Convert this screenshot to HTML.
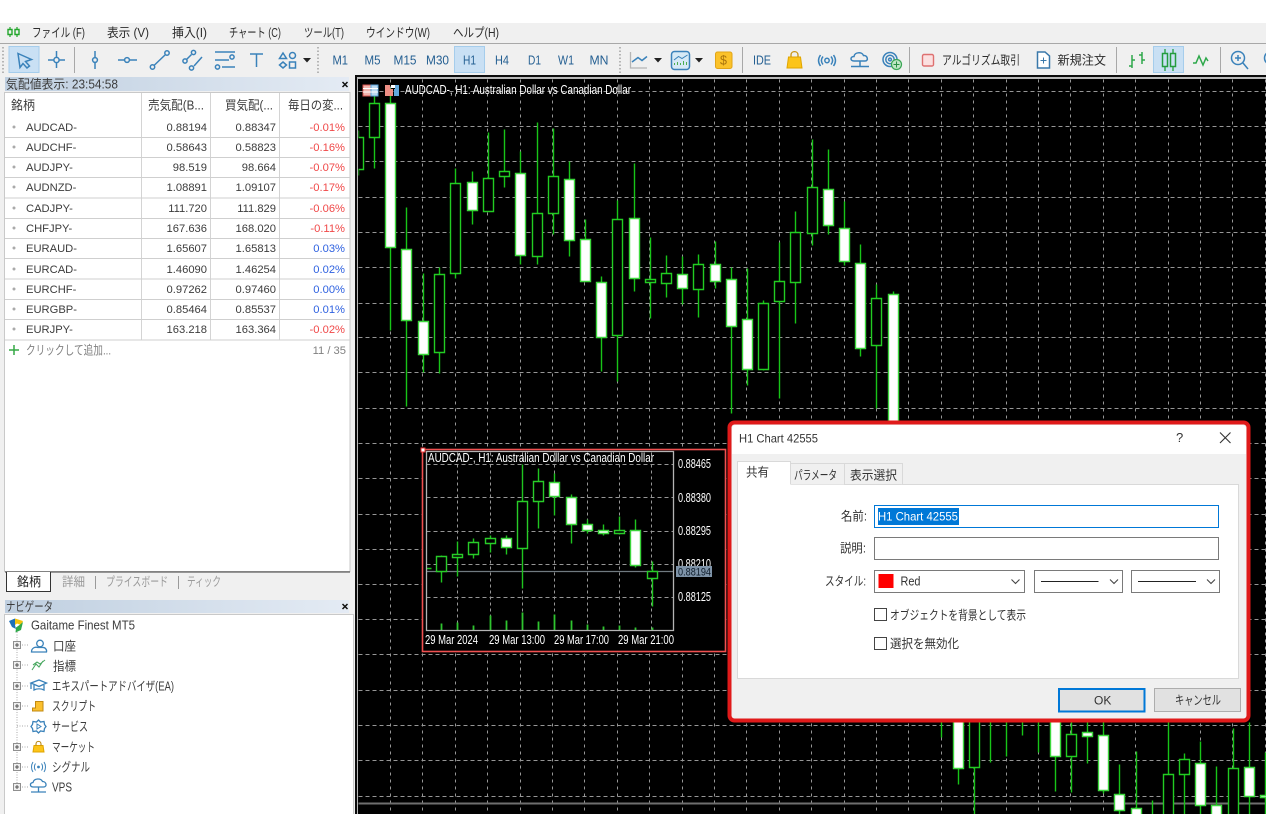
<!DOCTYPE html>
<html lang="ja"><head><meta charset="utf-8"><title>MT5</title>
<style>
html,body{margin:0;padding:0;background:#fff;width:1266px;height:836px;overflow:hidden}
svg{display:block;filter:blur(.3px)}
text{font-family:"Liberation Sans","Noto Sans CJK JP",sans-serif;font-size:11.2px;fill:#3c3c3c}
text[textLength]{font-size:12.6px}
.tb{fill:#245f92;font-size:12.5px}
.r{text-anchor:end}
.m{fill:#fff;font-size:10.8px}
.i{fill:none;stroke:#3a82ba;stroke-width:1.5}
.c{font-size:12.8px;fill:#2c2c2c}
</style></head><body>
<svg width="1266" height="836" viewBox="0 0 1266 836" xmlns="http://www.w3.org/2000/svg">
<defs>
<linearGradient id="h"><stop offset="0" stop-color="#bfcfe0"/><stop offset="1" stop-color="#e4ebf4"/></linearGradient>
<clipPath id="cc"><rect x="358" y="79" width="908" height="735"/></clipPath>
</defs>
<rect width="1266" height="836" fill="#fff"/>

<!-- main chart -->
<rect x="355" y="75" width="911" height="739" fill="#0c0c0c"/>
<rect x="357" y="77" width="909" height="737" fill="#b8b8b8"/>
<rect x="358" y="79" width="908" height="735" fill="#000"/>
<g clip-path="url(#cc)" transform="translate(.5 .5)">
<path fill="none" stroke="#969696" stroke-dasharray="4 3" d="M358 91H1266M358 126H1266M358 161H1266M358 197H1266M358 232H1266M358 267H1266M358 303H1266M358 337H1266M358 372H1266M358 408H1266M358 443H1266M358 478H1266M358 514H1266M358 549H1266M358 584H1266M358 619H1266M358 654H1266M358 690H1266M358 725H1266M358 760H1266M358 796H1266"/>
<path fill="none" stroke="#969696" stroke-dasharray="3 4" d="M390 79V814M422 79V814M455 79V814M487 79V814M520 79V814M552 79V814M584 79V814M617 79V814M649 79V814M682 79V814M714 79V814M746 79V814M779 79V814M811 79V814M844 79V814M876 79V814M908 79V814M941 79V814M973 79V814M1006 79V814M1038 79V814M1070 79V814M1103 79V814M1135 79V814M1168 79V814M1200 79V814M1232 79V814M1265 79V814"/>
<path fill="none" stroke="#6e6e6e" stroke-width="2" d="M358 803H1266"/>
<path fill="none" stroke="#18c418" stroke-width="1.400" d="M358 130V175M374 96V168M390 88V330M406 207V406M423 273V372M439 267V373M455 168V278M472 171V224M488 132V211M504 129V187M520 151V264M537 122V264M553 128V234M569 161V256M585 219V281M601 276V371M617 200V381M634 163V291M650 237V318M666 255V297M682 256V304M698 254V317M715 241V288M731 267V413M747 268V385M763 300V370M779 242V398M795 211V323M812 139V245M828 149V234M844 201V265M860 244V356M876 284V408M893 291V430M941 722V737M958 722V784M974 722V814M990 722V762M1006 722V756M1022 722V735M1038 722V752M1055 722V791M1071 722V792M1087 722V763M1103 722V793M1119 764V814M1136 751V814M1152 800V814M1168 722V814M1184 753V814M1200 741V814M1216 766V814M1233 728V814M1249 722V814M1265 752V814"/>
<path fill="#000" stroke="#22cc22" stroke-width="1.400" d="M353 137h10V169h-10zM369 103h10V137h-10zM434 274h10V352h-10zM450 183h10V273h-10zM483 178h10V211h-10zM499 171h10V176h-10zM532 213h10V256h-10zM548 176h10V213h-10zM612 219h10V335h-10zM645 279h10V282h-10zM661 273h10V283h-10zM693 264h10V289h-10zM758 303h10V369h-10zM774 281h10V301h-10zM790 232h10V282h-10zM807 187h10V233h-10zM871 298h10V345h-10zM969 700h10V767h-10zM1066 734h10V756h-10zM1163 774h10V830h-10zM1179 759h10V774h-10zM1228 768h10V830h-10z"/>
<path fill="#fff" stroke="#3cd83c" stroke-width="1.400" d="M385 103h10V247h-10zM401 249h10V320h-10zM418 321h10V354h-10zM467 182h10V210h-10zM515 173h10V255h-10zM564 179h10V240h-10zM580 239h10V281h-10zM596 282h10V337h-10zM629 218h10V278h-10zM677 274h10V288h-10zM710 264h10V281h-10zM726 279h10V326h-10zM742 319h10V369h-10zM823 189h10V225h-10zM839 228h10V261h-10zM855 263h10V348h-10zM888 294h10V440h-10zM953 700h10V768h-10zM1050 700h10V756h-10zM1082 732h10V736h-10zM1098 735h10V790h-10zM1114 794h10V810h-10zM1131 808h10V830h-10zM1195 763h10V805h-10zM1211 805h10V830h-10zM1244 767h10V796h-10zM1260 795h10V797h-10z"/>
</g>
<!-- chart title -->
<rect x="363" y="85" width="15" height="11" fill="#f3b5ae" stroke="#d9534f"/>
<rect x="371" y="85" width="7" height="11" fill="#bcd9ef" stroke="#5aa2d8"/>
<path d="M363 88.500H378M363 92H378" stroke="#fff"/>
<path d="M385 85h5v4h3v7h-8z" fill="#ee8f85"/><path d="M391 85h4v3h-4z" fill="#fff"/><path d="M395 85h4v11h-5v-7h1z" fill="#63a9dc"/>
<text class="m" x="405" y="94" textLength="226" lengthAdjust="spacingAndGlyphs">AUDCAD-, H1:  Australian Dollar vs Canadian Dollar</text>

<!-- inset preview -->
<rect x="422.500" y="449.500" width="303" height="202" fill="#000" stroke="#f05050" stroke-width="1.600"/>
<rect x="421" y="448" width="4" height="4" fill="#fff" stroke="#e33"/>
<g transform="translate(.5 .5)">
<path fill="none" stroke="#969696" stroke-dasharray="4 3" d="M426 464H673M426 497H673M426 531H673M426 564H673M426 597H673"/>
<path fill="none" stroke="#969696" stroke-dasharray="3 3" d="M457 452V630M490 452V630M522 452V630M554 452V630M587 452V630M619 452V630M651 452V630"/>
<path fill="none" stroke="#707a80" stroke-width="1.300" d="M426 571H673"/>
<path fill="none" stroke="#1fc41f" stroke-width="1.400" d="M441 555V582M457 541V576M473 538V558M490 535V552M506 535V554M522 464V588M538 468V528M554 473V515M571 494V543M587 519V533M603 524V535M619 516V534M635 519V567M652 561V606M426 568H431"/>
<path fill="#000" stroke="#28cc28" stroke-width="1.400" d="M436 556h10V571h-10zM452 554h10V557h-10zM468 542h10V554h-10zM485 538h10V543h-10zM517 501h10V548h-10zM533 481h10V501h-10zM614 530h10V533h-10zM647 571h10V578h-10z"/>
<path fill="#fff" stroke="#3ad43a" stroke-width="1.400" d="M501 538h10V547h-10zM549 482h10V496h-10zM566 497h10V524h-10zM582 524h10V530h-10zM598 530h10V533h-10zM630 530h10V565h-10z"/>
<path fill="none" stroke="#2fc42f" stroke-width="1.800" d="M441 630V623M457 630V622M473 630V625M490 630V615M506 630V620M522 630V612M538 630V621M554 630V614M571 630V620M587 630V624M603 630V626M619 630V625M635 630V627M652 630V627"/>
<path fill="none" stroke="#b4b4b4" stroke-width="1.300" d="M426 451H673V630H426Z"/>
</g>
<text class="m" x="428" y="462" textLength="226" lengthAdjust="spacingAndGlyphs">AUDCAD-, H1:  Australian Dollar vs Canadian Dollar</text>
<g>
<text class="m" x="678" y="468" textLength="33" lengthAdjust="spacingAndGlyphs">0.88465</text>
<text class="m" x="678" y="502" textLength="33" lengthAdjust="spacingAndGlyphs">0.88380</text>
<text class="m" x="678" y="535" textLength="33" lengthAdjust="spacingAndGlyphs">0.88295</text>
<text class="m" x="678" y="568" textLength="33" lengthAdjust="spacingAndGlyphs">0.88210</text>
<rect x="676" y="566" width="36" height="11" fill="#7e93a8"/>
<text x="678" y="575.500" style="font-size:10.8px;fill:#0e1c2a" textLength="33" lengthAdjust="spacingAndGlyphs">0.88194</text>
<text class="m" x="678" y="601" textLength="33" lengthAdjust="spacingAndGlyphs">0.88125</text>
<text class="m" x="425" y="644" textLength="53" lengthAdjust="spacingAndGlyphs">29 Mar 2024</text>
<text class="m" x="489" y="644" textLength="56" lengthAdjust="spacingAndGlyphs">29 Mar 13:00</text>
<text class="m" x="554" y="644" textLength="55" lengthAdjust="spacingAndGlyphs">29 Mar 17:00</text>
<text class="m" x="618" y="644" textLength="56" lengthAdjust="spacingAndGlyphs">29 Mar 21:00</text>
</g>

<!-- menu bar -->
<rect y="23" width="1266" height="20" fill="#f0f0f0"/>
<rect y="43" width="1266" height="1" fill="#a8a8a8"/>
<path d="M10 27V37M17 27V37" stroke="#22a52b" stroke-width="1.200"/>
<path d="M8 29.500h4v5h-4zM15 29.500h4v5h-4z" fill="#f0f0f0" stroke="#22a52b" stroke-width="1.400"/>
<g>
<text class="c" x="32" y="37" textLength="53" lengthAdjust="spacingAndGlyphs">ファイル (F)</text>
<text class="c" x="107" y="37" textLength="42" lengthAdjust="spacingAndGlyphs">表示 (V)</text>
<text class="c" x="172" y="37" textLength="35" lengthAdjust="spacingAndGlyphs">挿入(I)</text>
<text class="c" x="229" y="37" textLength="52" lengthAdjust="spacingAndGlyphs">チャート (C)</text>
<text class="c" x="304" y="37" textLength="40" lengthAdjust="spacingAndGlyphs">ツール(T)</text>
<text class="c" x="366" y="37" textLength="64" lengthAdjust="spacingAndGlyphs">ウインドウ(W)</text>
<text class="c" x="453" y="37" textLength="46" lengthAdjust="spacingAndGlyphs">ヘルプ(H)</text>
</g>

<!-- toolbar -->
<rect y="44" width="1266" height="31" fill="#f0f0f0"/>
<path d="M3 47V73M318 47V73M620 47V73" stroke="#b5b5b5" stroke-width="2" stroke-dasharray="1.500 2"/>
<rect x="9" y="46.500" width="30" height="26" fill="#c9e0f4" stroke="#a5cdec"/>
<rect x="454.500" y="46.500" width="30" height="26" fill="#c9e0f4" stroke="#a5cdec"/>
<rect x="1153.500" y="46.500" width="30" height="26" fill="#c9e0f4" stroke="#a5cdec"/>
<path d="M74.500 47V73M742.500 47V73M909.500 47V73M1116.500 47V73M1220.500 47V73" stroke="#a8a8a8"/>
<path class="i" d="M18 53.500L31.500 59.500L25.500 61.500L29.500 66L27 68L23 63.500L20 67.500Z"/>
<path class="i" d="M48 60H53.500M59.500 60H65M56.500 51V57M56.500 63V68"/><circle class="i" cx="56.500" cy="60" r="2.600"/>
<path class="i" d="M95 51V57M95 63V69"/><circle class="i" cx="95" cy="60" r="2.400"/>
<path class="i" d="M118 60H124M130 60H137"/><circle class="i" cx="127" cy="60" r="2.400"/>
<path class="i" d="M154 65.500L165 55"/><circle class="i" cx="152.500" cy="67" r="2.200"/><circle class="i" cx="167" cy="53" r="2.200"/>
<path class="i" d="M186.500 59.500L191.500 54.500M194 66L202 57"/><circle class="i" cx="185" cy="61" r="2.100"/><circle class="i" cx="193.500" cy="52.500" r="2.100"/><circle class="i" cx="191.500" cy="68" r="2.100"/>
<path class="i" d="M215 52H235M215 60H229M222 67H235"/><circle class="i" cx="232" cy="57" r="2.100"/><circle class="i" cx="217.500" cy="67" r="2.100"/>
<path class="i" d="M250 54H263M256.500 54V67"/>
<path class="i" d="M283 53L286.500 58.500H279.500Z"/><circle class="i" cx="292.500" cy="55.500" r="3"/><path class="i" d="M283 62L286.500 65L283 68L279.500 65Z"/><rect class="i" x="289.500" y="62" width="6" height="6"/>
<path d="M303 58H311L307 62.500Z" fill="#222"/>
<g>
<text class="tb" x="332.500" y="64.500" textLength="15.500" lengthAdjust="spacingAndGlyphs">M1</text>
<text class="tb" x="364.500" y="64.500" textLength="16" lengthAdjust="spacingAndGlyphs">M5</text>
<text class="tb" x="393.500" y="64.500" textLength="23" lengthAdjust="spacingAndGlyphs">M15</text>
<text class="tb" x="426" y="64.500" textLength="23" lengthAdjust="spacingAndGlyphs">M30</text>
<text class="tb" x="463" y="64.500" textLength="13" lengthAdjust="spacingAndGlyphs">H1</text>
<text class="tb" x="495" y="64.500" textLength="14" lengthAdjust="spacingAndGlyphs">H4</text>
<text class="tb" x="528" y="64.500" textLength="13" lengthAdjust="spacingAndGlyphs">D1</text>
<text class="tb" x="558" y="64.500" textLength="16" lengthAdjust="spacingAndGlyphs">W1</text>
<text class="tb" x="589.500" y="64.500" textLength="19" lengthAdjust="spacingAndGlyphs">MN</text>
<text class="tb" x="753" y="64.500" textLength="18" lengthAdjust="spacingAndGlyphs" style="font-size:13px">IDE</text>
</g>
<!-- right toolbar icons -->
<path d="M630.500 52V68H647" fill="none" stroke="#b5b5b5" stroke-width="1.300"/>
<path d="M632 62L638 57.500L642 60.500L647 56.500" class="i"/>
<path d="M654 58H662L658 62.500Z M695 58H703L699 62.500Z" fill="#222"/>
<rect x="671.500" y="51.500" width="18" height="18" rx="3" fill="#d6eaf6" stroke="#3a82ba" stroke-width="1.500"/>
<path d="M674 60L678.500 56.500L682 58.500L687.500 55" fill="none" stroke="#3a82ba"/>
<path d="M674.500 65V63M677.500 65V62M680.500 65V63M683.500 65V61M686.500 65V62" stroke="#4caf50"/>
<rect x="715.500" y="52" width="16.500" height="16.500" rx="2" fill="#fbc22a" stroke="#e2a516"/>
<text x="720" y="64.500" style="font-size:12.500px;fill:#a9740d">$</text>
<path d="M788.500 57H800.500L802 68H787Z" fill="#fcc419" stroke="#e0a500"/>
<path d="M791 57V55C791 50.500 798 50.500 798 55V57" fill="none" stroke="#c99412" stroke-width="1.300"/>
<circle cx="827" cy="60.500" r="2.200" class="i"/>
<path class="i" d="M823 56.500C821 59 821 62 823 64.500M831 56.500C833 59 833 62 831 64.500M820.500 55C818 58.500 818 62.500 820.500 66M833.500 55C836 58.500 836 62.500 833.500 66"/>
<path class="i" d="M854 61C850 61 850 56.500 854 56.500C854.500 52 862 51.500 863.500 55.500C867.500 55 869 61 865 61Z"/>
<path class="i" d="M860 61V66M851 66.500H869"/>
<circle cx="890" cy="59.500" r="7" class="i"/><circle cx="890" cy="59.500" r="4.200" class="i"/><circle cx="890" cy="59.500" r="1.400" class="i"/>
<circle cx="896.500" cy="64.500" r="5" fill="#bfe6c5" stroke="#3aa655" stroke-width="1.200"/><path d="M893.500 64.500H899.500M896.500 61.500V67.500" stroke="#2a8f45"/>
<rect x="922.500" y="54.500" width="11" height="11.500" rx="1.500" fill="#fbe0e0" stroke="#de7070" stroke-width="1.400"/>
<text class="c" x="942" y="64.500" textLength="78" lengthAdjust="spacingAndGlyphs">アルゴリズム取引</text>
<path d="M1037.500 52H1045L1049.500 56V68H1037.500Z" fill="#fff" stroke="#3a78aa" stroke-width="1.500"/>
<path d="M1040.500 60.500H1046.500M1043.500 57.500V63.500" stroke="#3a78aa"/>
<text class="c" x="1057.500" y="64.500" textLength="48.500" lengthAdjust="spacingAndGlyphs">新規注文</text>
<path d="M1132 55V68M1129 66H1132M1132 60H1135M1142 52V64M1139 55H1142M1142 60H1145" fill="none" stroke="#2da84a" stroke-width="1.500"/>
<path d="M1165 49V71M1173 49V71" stroke="#239c3e" stroke-width="1.300"/>
<path d="M1162.500 53.500h5v13h-5zM1170.500 53.500h5v13h-5z" fill="#c9e0f4" stroke="#239c3e" stroke-width="1.500"/>
<path d="M1193 63L1196 63L1199 56L1203 65L1206 58L1208 61" fill="none" stroke="#2da84a" stroke-width="1.500"/>
<circle cx="1238" cy="58" r="6.500" class="i"/><path class="i" d="M1243 63L1248 69M1235 58H1241M1238 55V61"/>
<circle cx="1271" cy="58" r="6.500" class="i"/>

<!-- left column -->
<rect y="75" width="355" height="739" fill="#f0f0f0"/>
<rect x="355" y="75" width="2" height="739" fill="#0c0c0c"/>
<rect x="5" y="77" width="344" height="14" fill="url(#h)"/>
<text x="6" y="88.500" textLength="112" lengthAdjust="spacingAndGlyphs">気配値表示: 23:54:58</text>
<path d="M342.500 82L347.500 87M347.500 82L342.500 87" stroke="#111" stroke-width="1.500"/>
<rect x="4.500" y="92.500" width="345.500" height="479" fill="#fff" stroke="#c9c9c9"/>
<text x="11" y="109.500" textLength="24" lengthAdjust="spacingAndGlyphs">銘柄</text>
<text x="148" y="109.500" textLength="56" lengthAdjust="spacingAndGlyphs">売気配(B...</text>
<text x="225" y="109.500" textLength="48" lengthAdjust="spacingAndGlyphs">買気配(...</text>
<text x="288" y="109.500" textLength="55" lengthAdjust="spacingAndGlyphs">毎日の変...</text>
<path d="M141.500 93V340M210.500 93V340M279.500 93V340" stroke="#d4d4d4"/>
<path d="M5 137.500H350M5 157.500H350M5 177.500H350M5 198H350M5 218.500H350M5 238.500H350M5 258.500H350M5 279H350M5 299.500H350M5 319.500H350M5 340H350" stroke="#cfcfcf"/>
<g fill="#aaa"><circle cx="14" cy="127" r="1.500"/><circle cx="14" cy="147" r="1.500"/><circle cx="14" cy="167" r="1.500"/><circle cx="14" cy="187" r="1.500"/><circle cx="14" cy="208" r="1.500"/><circle cx="14" cy="228" r="1.500"/><circle cx="14" cy="248" r="1.500"/><circle cx="14" cy="269" r="1.500"/><circle cx="14" cy="289" r="1.500"/><circle cx="14" cy="309" r="1.500"/><circle cx="14" cy="329" r="1.500"/></g>
<g>
<text x="26" y="131">AUDCAD-</text><text class="r" x="207" y="131">0.88194</text><text class="r" x="276" y="131">0.88347</text><text class="r" x="345" y="131" style="fill:#f04848">-0.01%</text>
<text x="26" y="151">AUDCHF-</text><text class="r" x="207" y="151">0.58643</text><text class="r" x="276" y="151">0.58823</text><text class="r" x="345" y="151" style="fill:#f04848">-0.16%</text>
<text x="26" y="171">AUDJPY-</text><text class="r" x="207" y="171">98.519</text><text class="r" x="276" y="171">98.664</text><text class="r" x="345" y="171" style="fill:#f04848">-0.07%</text>
<text x="26" y="191">AUDNZD-</text><text class="r" x="207" y="191">1.08891</text><text class="r" x="276" y="191">1.09107</text><text class="r" x="345" y="191" style="fill:#f04848">-0.17%</text>
<text x="26" y="212">CADJPY-</text><text class="r" x="207" y="212">111.720</text><text class="r" x="276" y="212">111.829</text><text class="r" x="345" y="212" style="fill:#f04848">-0.06%</text>
<text x="26" y="232">CHFJPY-</text><text class="r" x="207" y="232">167.636</text><text class="r" x="276" y="232">168.020</text><text class="r" x="345" y="232" style="fill:#f04848">-0.11%</text>
<text x="26" y="252">EURAUD-</text><text class="r" x="207" y="252">1.65607</text><text class="r" x="276" y="252">1.65813</text><text class="r" x="345" y="252" style="fill:#2f62e0">0.03%</text>
<text x="26" y="273">EURCAD-</text><text class="r" x="207" y="273">1.46090</text><text class="r" x="276" y="273">1.46254</text><text class="r" x="345" y="273" style="fill:#2f62e0">0.02%</text>
<text x="26" y="293">EURCHF-</text><text class="r" x="207" y="293">0.97262</text><text class="r" x="276" y="293">0.97460</text><text class="r" x="345" y="293" style="fill:#2f62e0">0.00%</text>
<text x="26" y="313">EURGBP-</text><text class="r" x="207" y="313">0.85464</text><text class="r" x="276" y="313">0.85537</text><text class="r" x="345" y="313" style="fill:#2f62e0">0.01%</text>
<text x="26" y="333">EURJPY-</text><text class="r" x="207" y="333">163.218</text><text class="r" x="276" y="333">163.364</text><text class="r" x="345" y="333" style="fill:#f04848">-0.02%</text>
</g>
<path d="M9 350H19M14 345V355" stroke="#35a845" stroke-width="1.500"/>
<text x="26" y="354.500" style="fill:#808080" textLength="85" lengthAdjust="spacingAndGlyphs">クリックして追加...</text>
<text class="r" x="346" y="354" style="fill:#808080">11 / 35</text>

<!-- tabs -->
<rect x="4" y="572" width="347" height="24" fill="#f0f0f0"/>
<path d="M5 572H350" stroke="#3a3a3a" stroke-width="1"/>
<path d="M6.500 572V591.500H50.500V572" fill="#fff" stroke="#333"/>
<text x="17" y="586" style="fill:#222" textLength="24" lengthAdjust="spacingAndGlyphs">銘柄</text>
<text x="62" y="586" style="fill:#9a9a9a" textLength="23" lengthAdjust="spacingAndGlyphs">詳細</text>
<path d="M95.500 576V589M178.500 576V589" stroke="#9a9a9a"/>
<text x="106" y="586" style="fill:#9a9a9a" textLength="62" lengthAdjust="spacingAndGlyphs">プライスボード</text>
<text x="187" y="586" style="fill:#9a9a9a" textLength="34" lengthAdjust="spacingAndGlyphs">ティック</text>

<!-- navigator -->
<rect x="5" y="600" width="344" height="13" fill="url(#h)"/>
<text x="6" y="611" textLength="47" lengthAdjust="spacingAndGlyphs">ナビゲータ</text>
<path d="M342.500 604L347.500 609M347.500 604L342.500 609" stroke="#111" stroke-width="1.500"/>
<rect x="4.500" y="614.500" width="349" height="210" fill="#fff" stroke="#c9c9c9"/>
<path d="M17 632V787M17 645H29M17 665H29M17 686H29M17 706H29M17 726H29M17 747H29M17 767H29M17 787H29" stroke="#aaa" stroke-dasharray="1 1.500" fill="none"/>
<g fill="#eee" stroke="#8f8f8f"><rect x="13.500" y="641.500" width="7" height="7"/><rect x="13.500" y="661.500" width="7" height="7"/><rect x="13.500" y="682.500" width="7" height="7"/><rect x="13.500" y="702.500" width="7" height="7"/><rect x="13.500" y="743.500" width="7" height="7"/><rect x="13.500" y="763.500" width="7" height="7"/><rect x="13.500" y="783.500" width="7" height="7"/></g>
<path d="M15 645H19M17 643V647M15 665H19M17 663V667M15 686H19M17 684V688M15 706H19M17 704V708M15 747H19M17 745V749M15 767H19M17 765V769M15 787H19M17 785V789" stroke="#333" stroke-width=".8"/>
<!-- logo -->
<path d="M9 621L15 618.500V625L16 629L12 627Z" fill="#1f6fb8"/><path d="M15 618.500L23 621L21 625L17 623.500L15 625Z" fill="#f4c20d"/><path d="M23 622L21 630L15.500 632.500L16 627.500L19.500 625Z" fill="#2fa84a"/>
<text x="31" y="629.500" textLength="104" lengthAdjust="spacingAndGlyphs">Gaitame Finest MT5</text>
<!-- nav icons -->
<circle cx="40" cy="643.500" r="3.300" class="i" style="stroke-width:1.300"/><path class="i" style="stroke-width:1.300" d="M31.500 652C31.500 648 35 646.500 38 647.500H42C45.500 647 47 650 46.500 652Z"/>
<path d="M32 670L36 664L39 667L43 661M33 665L37 662L40 664L45 660" fill="none" stroke="#49a860" stroke-width="1.100"/>
<path class="i" style="stroke-width:1.300" d="M31 683L39 680L46.500 683L39 686.500Z"/><path class="i" style="stroke-width:1.300" d="M34 685V690C37 688.500 41 688.500 44 690V685M31 683V689"/>
<path d="M35.500 701.500H43V711H32.500V708H35.500Z" fill="#fbc02d" stroke="#c28a12"/>
<path class="i" style="stroke-width:1.300" d="M38.500 720L40.500 722L44 721.500L44.500 724.500L46 726.500L44.500 728.500L44 731.500L40.500 731L38.500 733L36.500 731L33 731.500L32.500 728.500L31 726.500L32.500 724.500L33 721.500L36.500 722Z"/>
<path d="M37 724V729L41 726.500Z" class="i" style="stroke-width:1"/>
<path d="M34 745.500H43L44 752H33Z" fill="#fcc419" stroke="#dfa400"/><path d="M36 745.500V744C36 740.500 41 740.500 41 744V745.500" fill="none" stroke="#b98612" stroke-width="1.100"/>
<circle cx="38.500" cy="767" r="1.400" fill="#3a82ba"/>
<path class="i" d="M35.500 763.500C34 765.500 34 768.500 35.500 770.500M41.500 763.500C43 765.500 43 768.500 41.500 770.500M33 762C31 765 31 769 33 772M44 762C46 765 46 769 44 772" style="stroke-width:1"/>
<path class="i" style="stroke-width:1.300" d="M33.500 787C29.500 787 29.500 783 33 782.500C34 778 41 778 42.500 781.500C46.500 781.500 47.500 787 43.500 787Z"/><path class="i" style="stroke-width:1.300" d="M38.500 787V792M31 792H46"/>
<g>
<text x="53" y="650.500" textLength="23" lengthAdjust="spacingAndGlyphs">口座</text>
<text x="53" y="670.500" textLength="23" lengthAdjust="spacingAndGlyphs">指標</text>
<text x="52" y="690.500" textLength="122" lengthAdjust="spacingAndGlyphs">エキスパートアドバイザ(EA)</text>
<text x="52" y="710.500" textLength="44" lengthAdjust="spacingAndGlyphs">スクリプト</text>
<text x="52" y="731" textLength="36" lengthAdjust="spacingAndGlyphs">サービス</text>
<text x="52" y="751.500" textLength="43" lengthAdjust="spacingAndGlyphs">マーケット</text>
<text x="52" y="771.500" textLength="38" lengthAdjust="spacingAndGlyphs">シグナル</text>
<text x="52" y="791.500" textLength="20" lengthAdjust="spacingAndGlyphs">VPS</text>
</g>

<!-- bottom white cover -->
<rect y="814" width="1266" height="22" fill="#fff"/>

<!-- dialog -->
<rect x="729.500" y="422.500" width="519" height="298" rx="5" fill="#f0f0f0" stroke="#e01a1a" stroke-width="4"/>
<path d="M732 454V429a4 4 0 0 1 4-4H1242a4 4 0 0 1 4 4V454Z" fill="#fff"/>
<text x="739" y="442.500" style="fill:#333;font-size:12px" textLength="79" lengthAdjust="spacingAndGlyphs">H1 Chart 42555</text>
<text x="1176" y="442" style="font-size:13px;fill:#333">?</text>
<path d="M1220 432.500L1230.500 443M1230.500 432.500L1220 443" stroke="#333" stroke-width="1.100"/>
<rect x="737.500" y="484.500" width="501" height="194" fill="#fff" stroke="#d9d9d9"/>
<path d="M790.500 484.500V463.500H844.500V484.500M844.500 463.500H902.500V484.500" fill="#f0f0f0" stroke="#d9d9d9"/>
<path d="M737.500 485V461.500H790.500V485Z" fill="#fff"/><path d="M737.500 485V461.500H790.500V484" fill="none" stroke="#d9d9d9"/>
<text x="746" y="476.500" style="fill:#333" textLength="23" lengthAdjust="spacingAndGlyphs">共有</text>
<text x="794" y="479.500" style="fill:#333" textLength="43" lengthAdjust="spacingAndGlyphs">パラメータ</text>
<text x="850" y="479.500" style="fill:#333" textLength="47" lengthAdjust="spacingAndGlyphs">表示選択</text>

<text x="841" y="520.500" style="fill:#333" textLength="26" lengthAdjust="spacingAndGlyphs">名前:</text>
<rect x="874.500" y="505.500" width="344" height="22" fill="#fff" stroke="#0078d7"/>
<rect x="878" y="508" width="81" height="17" fill="#0078d7"/>
<text x="878" y="520.500" style="fill:#fff;font-size:12px" textLength="80" lengthAdjust="spacingAndGlyphs">H1 Chart 42555</text>

<text x="840" y="552.500" style="fill:#333" textLength="26" lengthAdjust="spacingAndGlyphs">説明:</text>
<rect x="874.500" y="537.500" width="344" height="22" fill="#fff" stroke="#7a7a7a"/>

<text x="825" y="585.500" style="fill:#333" textLength="41" lengthAdjust="spacingAndGlyphs">スタイル:</text>
<rect x="874.500" y="570.500" width="150" height="22" fill="#fff" stroke="#7a7a7a"/>
<rect x="878.500" y="574" width="15" height="14" fill="#f00"/>
<text x="900.500" y="585.500" style="fill:#333" textLength="20" lengthAdjust="spacingAndGlyphs">Red</text>
<rect x="1034.500" y="570.500" width="88" height="22" fill="#fff" stroke="#7a7a7a"/>
<rect x="1131.500" y="570.500" width="88" height="22" fill="#fff" stroke="#7a7a7a"/>
<path d="M1041 581.500H1098.500M1138 581.500H1196" stroke="#222"/>
<path d="M1011.500 579.500L1015.500 583.500L1019.500 579.500M1110 579.500L1114 583.500L1118 579.500M1207 579.500L1211 583.500L1215 579.500" fill="none" stroke="#444" stroke-width="1.100"/>

<rect x="874.500" y="608.500" width="12" height="12" fill="#fff" stroke="#444"/>
<text x="890" y="619.500" style="fill:#333" textLength="136" lengthAdjust="spacingAndGlyphs">オブジェクトを背景として表示</text>
<rect x="874.500" y="637.500" width="12" height="12" fill="#fff" stroke="#444"/>
<text x="890" y="648" style="fill:#333" textLength="69" lengthAdjust="spacingAndGlyphs">選択を無効化</text>

<rect x="1059" y="689" width="85.500" height="22.500" fill="#e1e1e1" stroke="#0078d7" stroke-width="2"/>
<text x="1094" y="704.500" style="font-size:12px;fill:#333">OK</text>
<rect x="1154.500" y="688.500" width="86" height="23" fill="#e1e1e1" stroke="#adadad"/>
<text x="1175" y="704.500" style="fill:#333" textLength="46" lengthAdjust="spacingAndGlyphs">キャンセル</text>
</svg>
</body></html>
